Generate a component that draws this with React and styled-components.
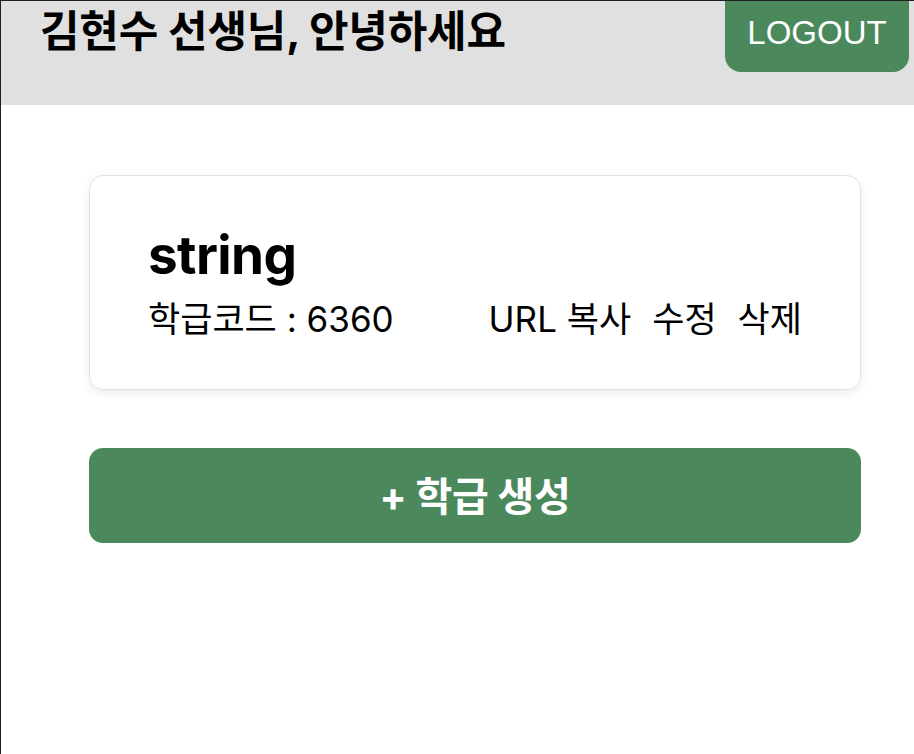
import React from "react";
import styled, { createGlobalStyle } from "styled-components";

const GlobalStyle = createGlobalStyle`
  html, body {
    margin: 0;
    padding: 0;
    background: #ffffff;
  }
  body {
    font-family: Inter, "Noto Sans CJK KR", sans-serif;
    color: #000;
  }
  * { box-sizing: border-box; }
`;

const Frame = styled.div`
  width: 914px;
  height: 754px;
  border-top: 1px solid #1e1e1e;
  border-left: 1px solid #1e1e1e;
  overflow: hidden;
  background: #fff;
`;

const Header = styled.header`
  height: 104px;
  background: #e0e0e0;
  display: flex;
  align-items: flex-start;
  justify-content: space-between;
  padding: 0 5px 0 39px;
`;

const Greeting = styled.h1`
  margin: 5px 0 0;
  font-size: 43px;
  font-weight: 700;
  letter-spacing: -0.2px;
  line-height: 50px;
`;

const LogoutButton = styled.button`
  width: 184px;
  height: 71px;
  border: none;
  border-radius: 0 0 16px 16px;
  background: #4b895c;
  color: #fff;
  font-family: "Liberation Sans", Arial, sans-serif;
  font-size: 33px;
  font-weight: 400;
  padding: 0;
  padding-bottom: 8px;
`;

const Main = styled.main`
  display: flex;
  flex-direction: column;
  gap: 58px;
  padding: 70px 53px 0 88px;
`;

const ClassCard = styled.section`
  height: 215px;
  border: 1px solid #e2e2e2;
  border-radius: 14px;
  box-shadow: 0 3px 8px rgba(0, 0, 0, 0.08);
  padding: 4px 58px 0;
  display: flex;
  flex-direction: column;
  justify-content: center;
`;

const ClassName = styled.h2`
  margin: 0;
  font-size: 53px;
  font-weight: 700;
  line-height: 56px;
  letter-spacing: -0.6px;
`;

const InfoRow = styled.div`
  margin-top: 13px;
  display: flex;
  justify-content: space-between;
  align-items: center;
  font-size: 35px;
  line-height: 46px;
`;

const Actions = styled.div`
  display: flex;
  gap: 21px;
`;

const ActionLink = styled.span`
  cursor: pointer;
`;

const CreateButton = styled.button`
  height: 95px;
  border: none;
  border-radius: 14px;
  background: #4b895c;
  color: #fff;
  font-family: Inter, "Noto Sans CJK KR", sans-serif;
  font-size: 40px;
  font-weight: 700;
  letter-spacing: -0.3px;
  padding: 0;
  padding-bottom: 4px;
`;

export default function App() {
  return (
    <>
      <GlobalStyle />
      <Frame>
        <Header>
          <Greeting>김현수 선생님, 안녕하세요</Greeting>
          <LogoutButton>LOGOUT</LogoutButton>
        </Header>
        <Main>
          <ClassCard>
            <ClassName>string</ClassName>
            <InfoRow>
              <span>학급코드 : 6360</span>
              <Actions>
                <ActionLink>URL 복사</ActionLink>
                <ActionLink>수정</ActionLink>
                <ActionLink>삭제</ActionLink>
              </Actions>
            </InfoRow>
          </ClassCard>
          <CreateButton>+ 학급 생성</CreateButton>
        </Main>
      </Frame>
    </>
  );
}
